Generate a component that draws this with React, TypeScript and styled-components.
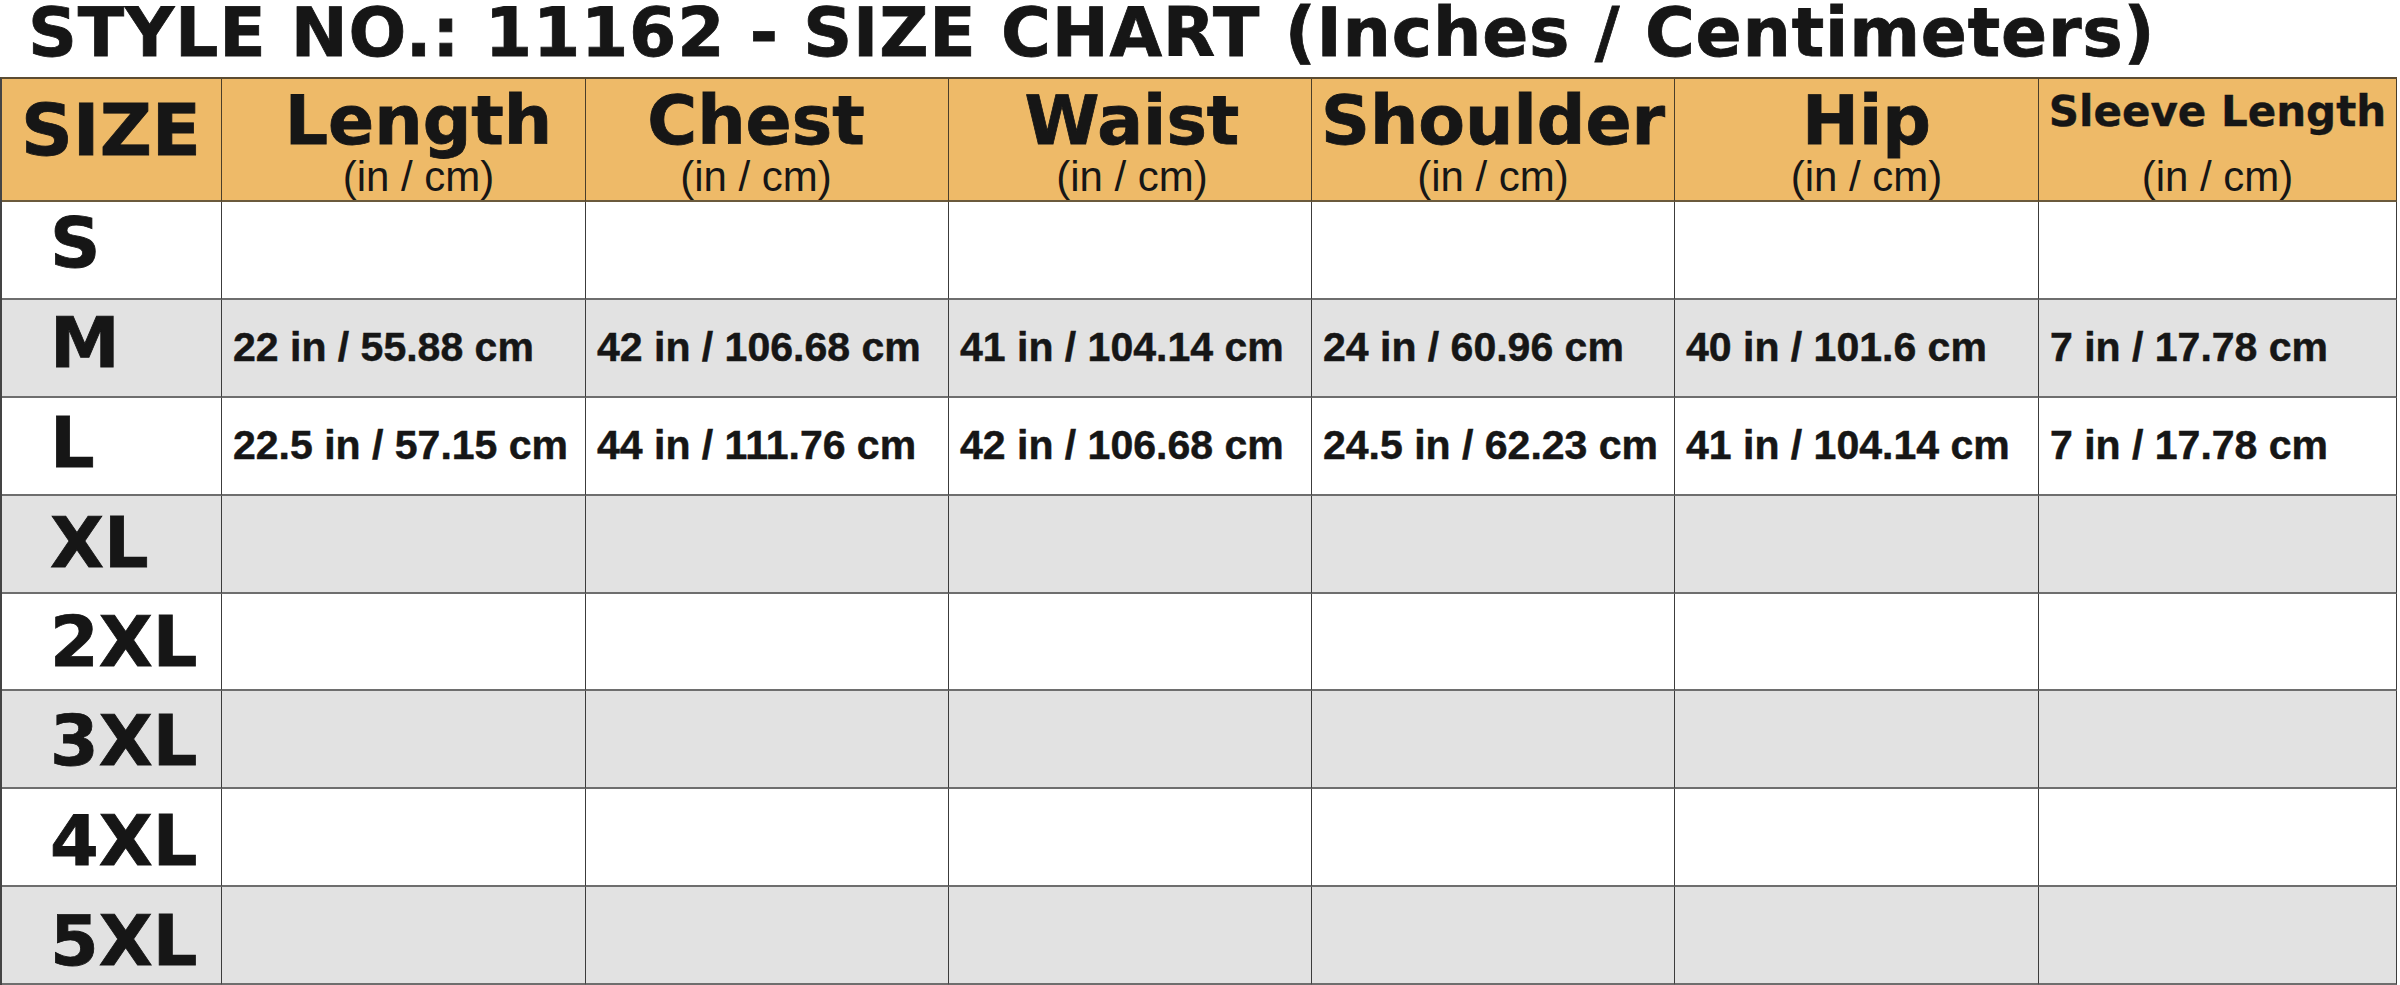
import styled, { createGlobalStyle } from 'styled-components';

const GlobalStyle = createGlobalStyle`
  body {
    margin: 0;
    background: #fff;
    color: #161616;
    font-family: "Liberation Sans", Arial, sans-serif;
  }
`;

const Page = styled.div`
  width: 2400px;
  height: 985px;
  overflow: hidden;
`;

const Title = styled.h1`
  margin: 0;
  height: 77px;
  padding-left: 28px;
  font-family: "DejaVu Sans", sans-serif;
  font-size: 68px;
  font-weight: 700;
  line-height: 66px;
  letter-spacing: 0.8px;
  white-space: nowrap;
  -webkit-text-stroke: 0.8px #161616;
`;

const Chart = styled.div`
  display: grid;
  grid-template-columns: 220px 364px 363px 363px 363px 364px 358px;
  grid-template-rows: 123px repeat(8, 97.9px);
  width: 2395px;
  border-top: 2px solid #5c4c32;
  border-left: 2px solid #444;
`;

const HeadCell = styled.div`
  box-sizing: border-box;
  display: flex;
  flex-direction: column;
  align-items: ${(p) => (p.$left ? 'flex-start' : 'center')};
  padding-top: ${(p) => (p.$left ? '15px' : '8px')};
  padding-left: ${(p) => (p.$left ? 19 : Math.max(0, p.$nudge * 2))}px;
  padding-right: ${(p) => (p.$left ? 0 : Math.max(0, -p.$nudge * 2))}px;
  background: #eeba68;
  border-right: 1px solid #4a3e2a;
  border-bottom: 2px solid #6b5a3c;
`;

const HeadLabel = styled.span`
  height: 68px;
  font-family: "DejaVu Sans", sans-serif;
  font-weight: 700;
  font-size: ${(p) => (p.$small ? '42px' : '68px')};
  line-height: ${(p) => (p.$small ? '49px' : '68px')};
  white-space: nowrap;
  -webkit-text-stroke: ${(p) => (p.$small ? '0.4px' : '0.8px')} #151515;
`;

const SizeHead = styled.span`
  font-family: "DejaVu Sans", sans-serif;
  font-weight: 700;
  font-size: 72px;
  line-height: 72px;
  -webkit-text-stroke: 0.8px #151515;
`;

const Unit = styled.span`
  font-family: "Liberation Sans", sans-serif;
  font-size: 42px;
  line-height: 40px;
  margin-top: 2px;
`;

const Cell = styled.div`
  box-sizing: border-box;
  display: flex;
  align-items: center;
  padding-left: ${(p) => (p.$size ? '48px' : '11px')};
  background: ${(p) => (p.$shade ? '#e2e2e2' : '#fff')};
  border-right: 1px solid #3c3c3c;
  border-bottom: 2px solid #6e6e6e;
  white-space: nowrap;
`;

const SizeLabel = styled.span`
  font-family: "DejaVu Sans", sans-serif;
  font-weight: 700;
  font-size: 70px;
  line-height: 70px;
  -webkit-text-stroke: 0.8px #151515;
  transform: translateY(${(p) => p.$shift}px);
`;

const Value = styled.span`
  font-family: "Liberation Sans", sans-serif;
  font-weight: 700;
  font-size: 41px;
  line-height: 41px;
  -webkit-text-stroke: 0.5px #161616;
`;

const columns = [
  { label: 'Length', nudge: 15 },
  { label: 'Chest', nudge: -11 },
  { label: 'Waist', nudge: 2 },
  { label: 'Shoulder', nudge: 0 },
  { label: 'Hip', nudge: 10 },
  { label: 'Sleeve Length', small: true, nudge: 0 },
];

const rows = [
  { size: 'S', values: [] },
  {
    size: 'M',
    values: ['22 in / 55.88 cm', '42 in / 106.68 cm', '41 in / 104.14 cm', '24 in / 60.96 cm', '40 in / 101.6 cm', '7 in / 17.78 cm'],
  },
  {
    size: 'L',
    values: ['22.5 in / 57.15 cm', '44 in / 111.76 cm', '42 in / 106.68 cm', '24.5 in / 62.23 cm', '41 in / 104.14 cm', '7 in / 17.78 cm'],
  },
  { size: 'XL', values: [] },
  { size: '2XL', values: [] },
  { size: '3XL', values: [] },
  { size: '4XL', values: [] },
  { size: '5XL', values: [] },
];

export default function App() {
  return (
    <Page>
      <GlobalStyle />
      <Title>STYLE NO.: 11162 - SIZE CHART (Inches / Centimeters)</Title>
      <Chart>
        <HeadCell $left>
          <SizeHead>SIZE</SizeHead>
        </HeadCell>
        {columns.map((c) => (
          <HeadCell key={c.label} $nudge={c.nudge}>
            <HeadLabel $small={c.small}>{c.label}</HeadLabel>
            <Unit>(in / cm)</Unit>
          </HeadCell>
        ))}
        {rows.map((r, i) => (
          <>
            <Cell key={r.size} $size $shade={i % 2 === 1}>
              <SizeLabel $shift={-7 + i * 1.85}>{r.size}</SizeLabel>
            </Cell>
            {columns.map((c, j) => (
              <Cell key={r.size + c.label} $shade={i % 2 === 1}>
                {r.values[j] && <Value>{r.values[j]}</Value>}
              </Cell>
            ))}
          </>
        ))}
      </Chart>
    </Page>
  );
}
